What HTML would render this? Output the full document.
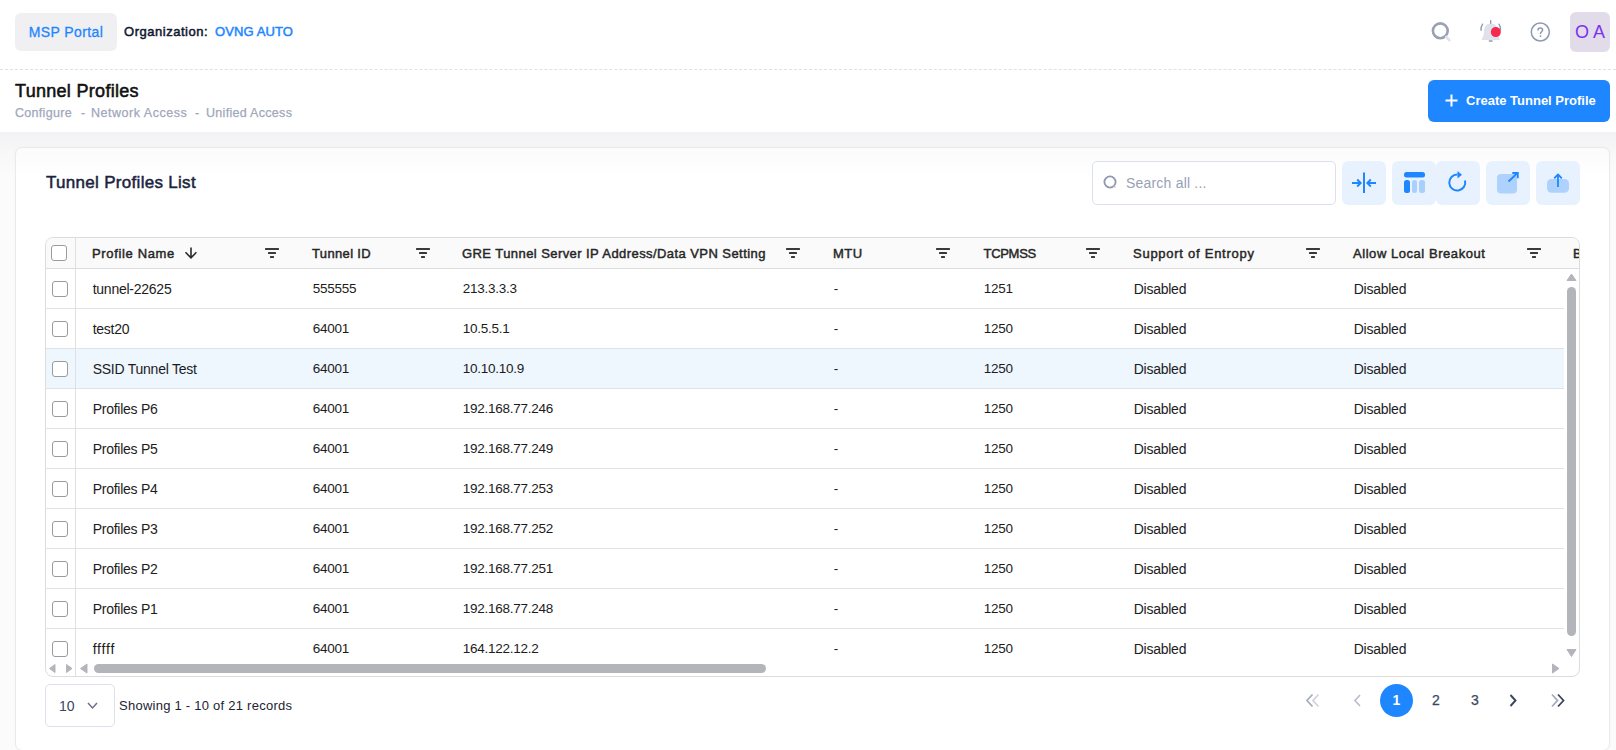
<!DOCTYPE html>
<html><head><meta charset="utf-8">
<style>
*{box-sizing:border-box;margin:0;padding:0}
html,body{width:1616px;height:750px;overflow:hidden;background:#fbfbfb;font-family:"Liberation Sans",sans-serif;color:#222}
.abs{position:absolute}
#topbar{position:absolute;left:0;top:0;width:1616px;height:70px;background:#fff;border-bottom:1px dashed #dde1ea}
#msp{left:15px;top:13px;width:102px;height:38px;background:#f0f0f3;border-radius:6px;color:#1e86ff;font-size:14px;line-height:38px;text-align:center;letter-spacing:0.4px;-webkit-text-stroke:0.3px #1e86ff}
#org{left:124px;top:24px;font-size:13px;color:#0f172e;white-space:nowrap;letter-spacing:0.52px;-webkit-text-stroke:0.5px #0f172e}
#org span{position:absolute;left:91px;top:0;color:#1e86ff;letter-spacing:0.1px;-webkit-text-stroke:0.5px #1e86ff}
#avatar{left:1570px;top:12px;width:40px;height:40px;background:#e2dbea;border-radius:6px;color:#7a32ee;font-size:18px;line-height:40px;text-align:center}
#pagehead{position:absolute;left:0;top:70px;width:1616px;height:62px;background:#fff}
#title{left:15px;top:81px;font-size:18px;color:#111;letter-spacing:0.3px;-webkit-text-stroke:0.55px #111}
#crumb span{position:absolute;top:106px;font-size:12.5px;color:#a0a7bb;white-space:nowrap;letter-spacing:0.3px;-webkit-text-stroke:0.25px #a0a7bb}
#create{left:1428px;top:80px;width:182px;height:42px;background:#1e86ff;border-radius:6px}
#create span{position:absolute;left:38px;top:13px;color:#fff;font-size:13px;font-weight:bold;white-space:nowrap}
#bg{position:absolute;left:0;top:132px;width:1616px;height:618px;background:linear-gradient(#f2f2f4 0,#f8f8f9 22px,#fbfbfb 45px,#fbfbfb 100%)}
#card{left:15px;top:147px;width:1595px;height:604px;background:linear-gradient(#fbfbfc 0,#fff 30px);border-radius:7px;border:1px solid #e9e9ee;box-shadow:0 0 3px rgba(0,0,20,0.03)}
#listtitle{left:46px;top:173px;font-size:17px;color:#1a2440;letter-spacing:0.3px;-webkit-text-stroke:0.5px #1a2440}
#search{left:1092px;top:161px;width:244px;height:44px;border:1px solid #dbe0ea;border-radius:5px;background:#fff}
#search .ph{position:absolute;left:33px;top:13px;font-size:14px;color:#98a0b6;letter-spacing:0.2px}
.tb{position:absolute;top:161px;width:44px;height:44px;background:#e8f2fe;border-radius:6px}
#tbl{position:absolute;left:45px;top:237px;width:1535px;height:440px;border:1px solid #dcdcdc;border-radius:8px;background:#fff}
#thbg{position:absolute;left:46px;top:238px;width:1533px;height:30px;background:#fafafa;border-radius:7px 7px 0 0}
.hline{position:absolute;left:46px;top:268px;width:1533px;height:1px;background:#dcdcdc}
.vdiv{position:absolute;left:75px;top:238px;width:1px;height:438px;background:#e0e0e0}
.rl{position:absolute;left:46px;width:1518px;height:1px;background:#e2e2e2}
.hl{position:absolute;left:46px;width:1518px;height:39px;background:#eef6fe}
.th{position:absolute;top:246px;font-size:13px;color:#262626;white-space:nowrap;letter-spacing:0.35px;-webkit-text-stroke:0.45px #262626}
.td{position:absolute;font-size:14px;line-height:16px;color:#1c1c1c;white-space:nowrap;letter-spacing:-0.25px}
.tn{font-size:13.5px}
.cb{position:absolute;width:16px;height:16px;border:1px solid #9b9b9b;border-radius:3px;background:#fff}
.flt{position:absolute;top:248px;fill:#3a3a3a}
.sb{position:absolute;background:#b4b5ba;border-radius:5px}
</style></head><body>
<div id="topbar"></div>
<div id="msp" class="abs">MSP Portal</div>
<div id="org" class="abs">Organization:<span>OVNG AUTO</span></div>
<svg class="abs" style="left:1428px;top:18px" width="26" height="26" viewBox="0 0 26 26"><circle cx="12.3" cy="12.8" r="7.4" fill="none" stroke="#9aa1b6" stroke-width="2.6"/><path d="M18.2 19L21.5 22.2" stroke="#dfe2ea" stroke-width="2.6" stroke-linecap="round"/></svg>
<svg class="abs" style="left:1478px;top:18px" width="26" height="26" viewBox="0 0 26 26"><path d="M4.5 21C4.5 21 6.8 18.5 6.8 14.5C6.8 9.5 9.2 6.5 12.8 6.5C16.4 6.5 18.8 9.5 18.8 14.5C18.8 18.5 21 21 21 21Z" fill="#dfe2ea" stroke="#dfe2ea" stroke-width="1.8" stroke-linejoin="round"/><path d="M12.7 2.6V5.2M11.4 23H14" stroke="#8f9ab5" stroke-width="1.4" stroke-linecap="round"/><path d="M3 12.2C2.8 10 3.4 8 4.6 6.2M22.4 12.2C22.7 10 22.2 8 21 6.2" fill="none" stroke="#8f9ab5" stroke-width="1.4" stroke-linecap="round"/><circle cx="17.8" cy="14.1" r="5" fill="#f5284f"/></svg>
<svg class="abs" style="left:1527px;top:19px" width="26" height="26" viewBox="0 0 26 26"><circle cx="13.3" cy="13" r="9" fill="none" stroke="#8d99b3" stroke-width="1.5"/><path d="M11 11.1C11 9.8 12 9 13.3 9C14.6 9 15.6 9.8 15.6 11C15.6 12.6 13.5 12.8 13.5 14.6" fill="none" stroke="#8d99b3" stroke-width="1.5" stroke-linecap="round"/><circle cx="13.5" cy="17.1" r="0.95" fill="#8d99b3"/></svg>
<div id="avatar" class="abs">O A</div>
<div id="pagehead"></div>
<div id="title" class="abs">Tunnel Profiles</div>
<div id="crumb"><span style="left:15px">Configure</span><span style="left:81px">-</span><span style="left:91px;letter-spacing:0.52px">Network Access</span><span style="left:195px">-</span><span style="left:206px">Unified Access</span></div>
<div id="create" class="abs"><svg class="abs" style="left:17px;top:14px" width="13" height="13" viewBox="0 0 13 13"><path d="M6.5 0.5V12.5M0.5 6.5H12.5" stroke="#fff" stroke-width="2"/></svg><span>Create Tunnel Profile</span></div>
<div id="bg"></div>
<div id="card" class="abs"></div>
<div id="listtitle" class="abs">Tunnel Profiles List</div>
<div id="search" class="abs"><svg class="abs" style="left:9px;top:12px" width="18" height="18" viewBox="0 0 18 18"><circle cx="8" cy="8" r="5.6" fill="none" stroke="#8e97b0" stroke-width="1.8"/><path d="M12 12L13.5 13.5" stroke="#c8ccd8" stroke-width="1.6"/></svg><span class="ph">Search all ...</span></div>
<div class="tb" style="left:1342px"><svg class="abs" style="left:0;top:0" width="44" height="44" viewBox="0 0 44 44"><path d="M22 11.5V32" stroke="#1e86ff" stroke-width="2"/><path d="M10 22H18.5M15.2 18.5L18.7 22L15.2 25.5M34 22H25.5M28.8 18.5L25.3 22L28.8 25.5" fill="none" stroke="#1e86ff" stroke-width="1.9"/></svg></div>
<div class="tb" style="left:1392px"><svg class="abs" style="left:0;top:0" width="44" height="44" viewBox="0 0 44 44"><rect x="12" y="11" width="21" height="5.5" rx="2.5" fill="#1e86ff"/><rect x="12" y="19" width="6" height="13" rx="2.5" fill="#1e86ff"/><rect x="20" y="19" width="5" height="13" rx="2.3" fill="#a9cffd"/><rect x="27" y="19" width="6" height="13" rx="2.5" fill="#a9cffd"/></svg></div>
<div class="tb" style="left:1436px"><svg class="abs" style="left:0;top:0" width="44" height="44" viewBox="0 0 44 44"><path d="M21.5 13.5A8 8 0 1 0 29 19.5" fill="none" stroke="#1e86ff" stroke-width="2"/><path d="M21.5 10L26 13.8L21.5 17.5Z" fill="#1e86ff"/></svg></div>
<div class="tb" style="left:1486px"><svg class="abs" style="left:0;top:0" width="44" height="44" viewBox="0 0 44 44"><rect x="11" y="13" width="20" height="19.5" rx="4" fill="#aed2fd"/><path d="M22.5 20.5L31.5 12" stroke="#1e86ff" stroke-width="1.8"/><path d="M26.3 12H31.8V17.3" fill="none" stroke="#1e86ff" stroke-width="1.8"/></svg></div>
<div class="tb" style="left:1536px"><svg class="abs" style="left:0;top:0" width="44" height="44" viewBox="0 0 44 44"><rect x="11" y="18" width="22" height="13.7" rx="4.5" fill="#aed2fd"/><path d="M22 13.5V26" stroke="#1e86ff" stroke-width="1.8"/><path d="M18.2 17.3L22 13.5L25.8 17.3" fill="none" stroke="#1e86ff" stroke-width="1.8" stroke-linejoin="round"/></svg></div>
<div id="tbl"></div>
<div id="thbg"></div>
<div class="hl" style="top:349px"></div>
<div class="rl" style="top:308px"></div>
<div class="rl" style="top:348px"></div>
<div class="rl" style="top:388px"></div>
<div class="rl" style="top:428px"></div>
<div class="rl" style="top:468px"></div>
<div class="rl" style="top:508px"></div>
<div class="rl" style="top:548px"></div>
<div class="rl" style="top:588px"></div>
<div class="rl" style="top:628px"></div>
<div class="hline"></div>
<div class="vdiv"></div>
<div class="cb" style="left:51px;top:245px"></div>
<div class="th" style="left:92px;letter-spacing:0.65px">Profile Name</div>
<div class="th" style="left:312px;letter-spacing:0.35px">Tunnel ID</div>
<div class="th" style="left:462px;letter-spacing:0.43px">GRE Tunnel Server IP Address/Data VPN Setting</div>
<div class="th" style="left:833px;letter-spacing:0.45px">MTU</div>
<div class="th" style="left:983.5px;letter-spacing:-0.3px">TCPMSS</div>
<div class="th" style="left:1133px;letter-spacing:0.74px">Support of Entropy</div>
<div class="th" style="left:1353px;letter-spacing:0.55px">Allow Local Breakout</div>
<div class="th" style="left:1573px;width:6px;overflow:hidden">B</div>
<svg class="flt" style="left:265px" width="14" height="11" viewBox="0 0 14 11"><rect x="0" y="0" width="14" height="2" rx="0.5"/><rect x="3" y="4" width="8" height="2" rx="0.5"/><rect x="5" y="8" width="4" height="2" rx="0.5"/></svg>
<svg class="flt" style="left:416px" width="14" height="11" viewBox="0 0 14 11"><rect x="0" y="0" width="14" height="2" rx="0.5"/><rect x="3" y="4" width="8" height="2" rx="0.5"/><rect x="5" y="8" width="4" height="2" rx="0.5"/></svg>
<svg class="flt" style="left:786px" width="14" height="11" viewBox="0 0 14 11"><rect x="0" y="0" width="14" height="2" rx="0.5"/><rect x="3" y="4" width="8" height="2" rx="0.5"/><rect x="5" y="8" width="4" height="2" rx="0.5"/></svg>
<svg class="flt" style="left:936px" width="14" height="11" viewBox="0 0 14 11"><rect x="0" y="0" width="14" height="2" rx="0.5"/><rect x="3" y="4" width="8" height="2" rx="0.5"/><rect x="5" y="8" width="4" height="2" rx="0.5"/></svg>
<svg class="flt" style="left:1086px" width="14" height="11" viewBox="0 0 14 11"><rect x="0" y="0" width="14" height="2" rx="0.5"/><rect x="3" y="4" width="8" height="2" rx="0.5"/><rect x="5" y="8" width="4" height="2" rx="0.5"/></svg>
<svg class="flt" style="left:1306px" width="14" height="11" viewBox="0 0 14 11"><rect x="0" y="0" width="14" height="2" rx="0.5"/><rect x="3" y="4" width="8" height="2" rx="0.5"/><rect x="5" y="8" width="4" height="2" rx="0.5"/></svg>
<svg class="flt" style="left:1527px" width="14" height="11" viewBox="0 0 14 11"><rect x="0" y="0" width="14" height="2" rx="0.5"/><rect x="3" y="4" width="8" height="2" rx="0.5"/><rect x="5" y="8" width="4" height="2" rx="0.5"/></svg>
<svg class="abs" style="left:184px;top:246px" width="14" height="14" viewBox="0 0 14 14"><path d="M7 1.4V12.2M1.5 6.3L7 11.9L12.4 6.3" fill="none" stroke="#2b2b2b" stroke-width="1.6"/></svg>
<div class="cb" style="left:52px;top:281px"></div>
<div class="td" style="left:92.7px;top:281px">tunnel-22625</div>
<div class="td tn" style="left:312.7px;top:281px">555555</div>
<div class="td tn" style="left:462.7px;top:281px">213.3.3.3</div>
<div class="td tn" style="left:833.7px;top:281px">-</div>
<div class="td tn" style="left:983.7px;top:281px">1251</div>
<div class="td" style="left:1133.7px;top:281px">Disabled</div>
<div class="td" style="left:1353.7px;top:281px">Disabled</div>
<div class="cb" style="left:52px;top:321px"></div>
<div class="td" style="left:92.7px;top:321px">test20</div>
<div class="td tn" style="left:312.7px;top:321px">64001</div>
<div class="td tn" style="left:462.7px;top:321px">10.5.5.1</div>
<div class="td tn" style="left:833.7px;top:321px">-</div>
<div class="td tn" style="left:983.7px;top:321px">1250</div>
<div class="td" style="left:1133.7px;top:321px">Disabled</div>
<div class="td" style="left:1353.7px;top:321px">Disabled</div>
<div class="cb" style="left:52px;top:361px"></div>
<div class="td" style="left:92.7px;top:361px">SSID Tunnel Test</div>
<div class="td tn" style="left:312.7px;top:361px">64001</div>
<div class="td tn" style="left:462.7px;top:361px">10.10.10.9</div>
<div class="td tn" style="left:833.7px;top:361px">-</div>
<div class="td tn" style="left:983.7px;top:361px">1250</div>
<div class="td" style="left:1133.7px;top:361px">Disabled</div>
<div class="td" style="left:1353.7px;top:361px">Disabled</div>
<div class="cb" style="left:52px;top:401px"></div>
<div class="td" style="left:92.7px;top:401px">Profiles P6</div>
<div class="td tn" style="left:312.7px;top:401px">64001</div>
<div class="td tn" style="left:462.7px;top:401px">192.168.77.246</div>
<div class="td tn" style="left:833.7px;top:401px">-</div>
<div class="td tn" style="left:983.7px;top:401px">1250</div>
<div class="td" style="left:1133.7px;top:401px">Disabled</div>
<div class="td" style="left:1353.7px;top:401px">Disabled</div>
<div class="cb" style="left:52px;top:441px"></div>
<div class="td" style="left:92.7px;top:441px">Profiles P5</div>
<div class="td tn" style="left:312.7px;top:441px">64001</div>
<div class="td tn" style="left:462.7px;top:441px">192.168.77.249</div>
<div class="td tn" style="left:833.7px;top:441px">-</div>
<div class="td tn" style="left:983.7px;top:441px">1250</div>
<div class="td" style="left:1133.7px;top:441px">Disabled</div>
<div class="td" style="left:1353.7px;top:441px">Disabled</div>
<div class="cb" style="left:52px;top:481px"></div>
<div class="td" style="left:92.7px;top:481px">Profiles P4</div>
<div class="td tn" style="left:312.7px;top:481px">64001</div>
<div class="td tn" style="left:462.7px;top:481px">192.168.77.253</div>
<div class="td tn" style="left:833.7px;top:481px">-</div>
<div class="td tn" style="left:983.7px;top:481px">1250</div>
<div class="td" style="left:1133.7px;top:481px">Disabled</div>
<div class="td" style="left:1353.7px;top:481px">Disabled</div>
<div class="cb" style="left:52px;top:521px"></div>
<div class="td" style="left:92.7px;top:521px">Profiles P3</div>
<div class="td tn" style="left:312.7px;top:521px">64001</div>
<div class="td tn" style="left:462.7px;top:521px">192.168.77.252</div>
<div class="td tn" style="left:833.7px;top:521px">-</div>
<div class="td tn" style="left:983.7px;top:521px">1250</div>
<div class="td" style="left:1133.7px;top:521px">Disabled</div>
<div class="td" style="left:1353.7px;top:521px">Disabled</div>
<div class="cb" style="left:52px;top:561px"></div>
<div class="td" style="left:92.7px;top:561px">Profiles P2</div>
<div class="td tn" style="left:312.7px;top:561px">64001</div>
<div class="td tn" style="left:462.7px;top:561px">192.168.77.251</div>
<div class="td tn" style="left:833.7px;top:561px">-</div>
<div class="td tn" style="left:983.7px;top:561px">1250</div>
<div class="td" style="left:1133.7px;top:561px">Disabled</div>
<div class="td" style="left:1353.7px;top:561px">Disabled</div>
<div class="cb" style="left:52px;top:601px"></div>
<div class="td" style="left:92.7px;top:601px">Profiles P1</div>
<div class="td tn" style="left:312.7px;top:601px">64001</div>
<div class="td tn" style="left:462.7px;top:601px">192.168.77.248</div>
<div class="td tn" style="left:833.7px;top:601px">-</div>
<div class="td tn" style="left:983.7px;top:601px">1250</div>
<div class="td" style="left:1133.7px;top:601px">Disabled</div>
<div class="td" style="left:1353.7px;top:601px">Disabled</div>
<div class="cb" style="left:52px;top:641px"></div>
<div class="td" style="left:92.7px;top:641px;letter-spacing:0.8px">fffff</div>
<div class="td tn" style="left:312.7px;top:641px">64001</div>
<div class="td tn" style="left:462.7px;top:641px">164.122.12.2</div>
<div class="td tn" style="left:833.7px;top:641px">-</div>
<div class="td tn" style="left:983.7px;top:641px">1250</div>
<div class="td" style="left:1133.7px;top:641px">Disabled</div>
<div class="td" style="left:1353.7px;top:641px">Disabled</div>
<div class="sb" style="left:1567px;top:287px;width:9px;height:349px"></div>
<svg class="abs" style="left:1566px;top:272px" width="11" height="10" viewBox="0 0 11 10"><path d="M1 8.5L5.5 2L10 8.5Z" fill="#b4b5ba" stroke="#b4b5ba" stroke-linejoin="round"/></svg>
<svg class="abs" style="left:1566px;top:648px" width="11" height="10" viewBox="0 0 11 10"><path d="M1 1.5L5.5 8.5L10 1.5Z" fill="#b4b5ba" stroke="#b4b5ba" stroke-linejoin="round"/></svg>
<div class="sb" style="left:94px;top:664px;width:672px;height:9px"></div>
<svg class="abs" style="left:78px;top:663px" width="11" height="11" viewBox="0 0 11 11"><path d="M9 1L2.5 5.5L9 10Z" fill="#b4b5ba" stroke="#b4b5ba" stroke-linejoin="round"/></svg>
<svg class="abs" style="left:47px;top:663px" width="11" height="11" viewBox="0 0 11 11"><path d="M8 1.5L2.5 5.5L8 9.5Z" fill="#b4b5ba" stroke="#b4b5ba" stroke-linejoin="round"/></svg>
<svg class="abs" style="left:64px;top:663px" width="11" height="11" viewBox="0 0 11 11"><path d="M2.5 1.5L8 5.5L2.5 9.5Z" fill="#b4b5ba" stroke="#b4b5ba" stroke-linejoin="round"/></svg>
<svg class="abs" style="left:1550px;top:663px" width="11" height="11" viewBox="0 0 11 11"><path d="M2.5 1L9 5.5L2.5 10Z" fill="#b4b5ba" stroke="#b4b5ba" stroke-linejoin="round"/></svg>
<div class="abs" style="left:45px;top:684px;width:70px;height:43px;border:1px solid #dde1ec;border-radius:5px;background:#fff"></div>
<div class="abs" style="left:59px;top:698px;font-size:14px;color:#3c4561">10</div>
<svg class="abs" style="left:86px;top:700px" width="13" height="11" viewBox="0 0 13 11"><path d="M2 3L6.5 8L11 3" fill="none" stroke="#6b7288" stroke-width="1.5"/></svg>
<div class="abs" style="left:119px;top:698px;font-size:13px;color:#1c2333;white-space:nowrap;letter-spacing:0.25px">Showing 1 - 10 of 21 records</div>
<svg class="abs" style="left:1302px;top:690px" width="22" height="20" viewBox="0 0 22 20"><path d="M10.5 4.5L5 10.5L10.5 16.5" fill="none" stroke="#a6adbf" stroke-width="1.8"/><path d="M16.5 4.5L11 10.5L16.5 16.5" fill="none" stroke="#d0d4de" stroke-width="1.8"/></svg>
<svg class="abs" style="left:1350px;top:690px" width="14" height="20" viewBox="0 0 14 20"><path d="M10 5L5 10.5L10 16" fill="none" stroke="#b7bcca" stroke-width="1.6"/></svg>
<div class="abs" style="left:1380px;top:684px;width:33px;height:33px;border-radius:50%;background:#1e86ff;color:#fff;font-size:14px;font-weight:bold;line-height:33px;text-align:center">1</div>
<div class="abs" style="left:1432px;top:692px;font-size:14px;color:#3b4663;-webkit-text-stroke:0.25px #3b4663">2</div>
<div class="abs" style="left:1471px;top:692px;font-size:14px;color:#3b4663;-webkit-text-stroke:0.25px #3b4663">3</div>
<svg class="abs" style="left:1506px;top:690px" width="14" height="20" viewBox="0 0 14 20"><path d="M4.5 5L9.5 10.5L4.5 16" fill="none" stroke="#39425c" stroke-width="1.9"/></svg>
<svg class="abs" style="left:1547px;top:690px" width="22" height="20" viewBox="0 0 22 20"><path d="M5 4.5L10.5 10.5L5 16.5" fill="none" stroke="#a3aabb" stroke-width="1.8"/><path d="M11 4.5L16.5 10.5L11 16.5" fill="none" stroke="#3a435d" stroke-width="1.8"/></svg>
</body></html>
